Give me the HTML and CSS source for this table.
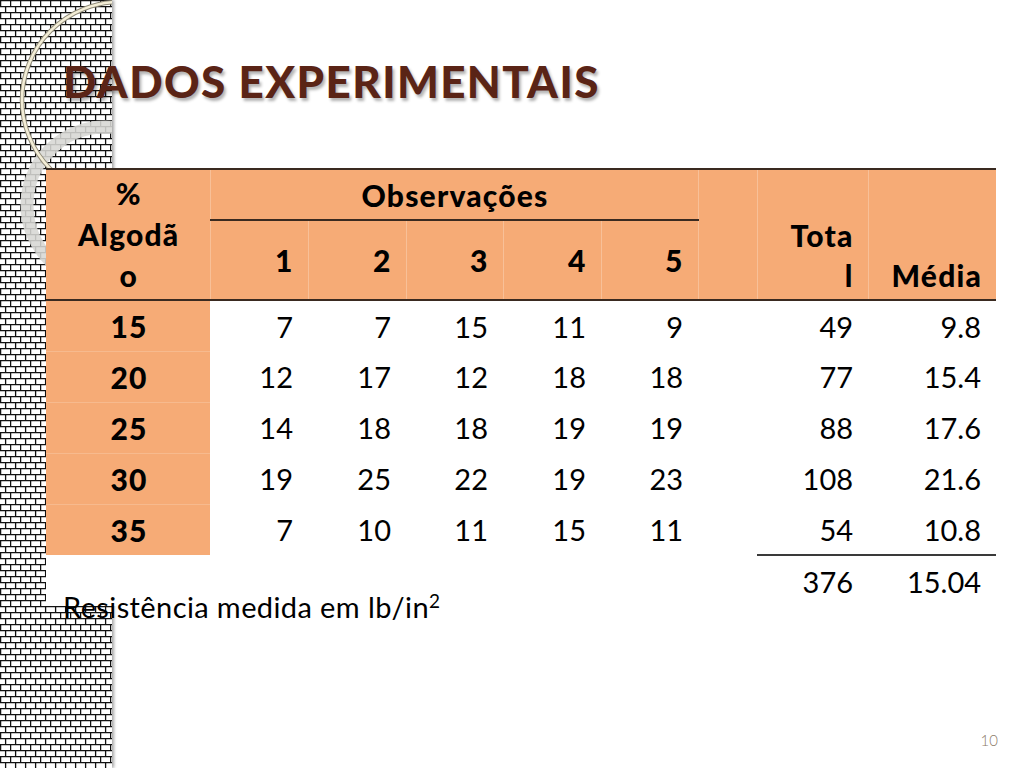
FILE: index.html
```html
<!DOCTYPE html>
<html lang="pt">
<head>
<meta charset="utf-8">
<title>Dados experimentais</title>
<link rel="stylesheet" href="styles.css">
</head>
<body>
<div class="slide">
  <div class="strip">
    <svg class="bricks" width="112" height="768" viewBox="0 0 112 768">
      <defs>
        <pattern id="brick" width="10" height="12" patternUnits="userSpaceOnUse">
          <rect width="10" height="12" fill="#ffffff"/>
          <path d="M0 0.6H10M0 6.6H10M0.6 0V6.6M5.6 6.6V12" stroke="#111" stroke-width="1.3" fill="none"/>
        </pattern>
      </defs>
      <rect width="112" height="768" fill="url(#brick)"/>
      <circle cx="105" cy="205" r="78" fill="none" stroke="rgba(215,215,212,0.88)" stroke-width="13"/>
      <circle cx="120" cy="100" r="98" fill="none" stroke="#8f8a78" stroke-width="4.5"/>
      <circle cx="120" cy="100" r="98" fill="none" stroke="#f3edd6" stroke-width="2.6"/>
    </svg>
  </div>

  <h1 class="title">DADOS EXPERIMENTAIS</h1>

  <table class="data">
    <colgroup>
      <col class="c-alg">
      <col class="c-obs"><col class="c-obs"><col class="c-obs3"><col class="c-obs"><col class="c-obs3">
      <col class="c-gap">
      <col class="c-tot">
      <col class="c-med">
    </colgroup>
    <thead>
      <tr class="h1">
        <th rowspan="2" class="alg">%<br>Algodã<br>o</th>
        <th colspan="5" class="obs">Observações</th>
        <th rowspan="2" class="sep"></th>
        <th rowspan="2" class="bot sep">Tota<br>l</th>
        <th rowspan="2" class="bot sep">Média</th>
      </tr>
      <tr class="h2">
        <th class="num first">1</th>
        <th class="num sep">2</th>
        <th class="num sep">3</th>
        <th class="num sep">4</th>
        <th class="num sep">5</th>
      </tr>
    </thead>
    <tbody>
      <tr><th class="rowh">15</th><td>7</td><td>7</td><td>15</td><td>11</td><td>9</td><td></td><td>49</td><td>9.8</td></tr>
      <tr><th class="rowh">20</th><td>12</td><td>17</td><td>12</td><td>18</td><td>18</td><td></td><td>77</td><td>15.4</td></tr>
      <tr><th class="rowh">25</th><td>14</td><td>18</td><td>18</td><td>19</td><td>19</td><td></td><td>88</td><td>17.6</td></tr>
      <tr><th class="rowh">30</th><td>19</td><td>25</td><td>22</td><td>19</td><td>23</td><td></td><td>108</td><td>21.6</td></tr>
      <tr><th class="rowh">35</th><td>7</td><td>10</td><td>11</td><td>15</td><td>11</td><td></td><td>54</td><td>10.8</td></tr>
      <tr class="sum"><td class="blank" colspan="7"></td><td class="tl">376</td><td class="tl">15.04</td></tr>
    </tbody>
  </table>

  <p class="note">Resistência medida em lb/in<sup>2</sup></p>

  <div class="pagenum">10</div>
</div>
</body>
</html>
```

FILE: styles.css
```css
* { box-sizing: border-box; }

html, body {
  margin: 0;
  padding: 0;
  background: #ffffff;
}

.slide {
  position: relative;
  width: 1024px;
  height: 768px;
  overflow: hidden;
  display: flex;
  flex-direction: column;
  font-family: "Lato", "Liberation Sans", sans-serif;
  color: #000;
  background: #fff;
}

.strip {
  position: absolute;
  left: 0;
  top: 0;
  width: 112px;
  height: 768px;
  box-shadow: 2px 0 3px rgba(0, 0, 0, 0.35);
  z-index: 0;
}

.bricks {
  display: block;
}

.title {
  position: relative;
  z-index: 2;
  margin: 0;
  padding: 55px 0 0 63px;
  font-size: 44px;
  line-height: 52px;
  font-weight: 900;
  color: #5a2416;
  letter-spacing: 1.4px;
  text-shadow: 2px 3px 3px rgba(0, 0, 0, 0.3);
}

.data {
  position: relative;
  z-index: 1;
  margin: 61px 0 0 46px;
  width: 950px;
  border-collapse: collapse;
  table-layout: fixed;
  font-size: 29px;
  background: #fff;
}

.c-alg { width: 164px; }
.c-obs { width: 98px; }
.c-obs3 { width: 97px; }
.c-gap { width: 59px; }
.c-tot { width: 111px; }
.c-med { width: 128px; }

.data thead tr {
  background: #f6ab76;
}

.data thead tr.h1 {
  border-top: 2px solid #3a2a20;
  height: 51px;
}

.data thead tr.h2 {
  height: 80px;
  border-bottom: 2px solid #3a2a20;
}

.data th {
  font-weight: 900;
  font-size: 30px;
  letter-spacing: 1.2px;
  padding: 0 14px 0 0;
}

.alg {
  text-align: center;
  padding: 0 0 0 2px !important;
  line-height: 41px;
  vertical-align: middle;
}

.obs {
  text-align: center;
  vertical-align: middle;
  border-bottom: 2px solid #3a2a20;
  border-left: 1px solid rgba(255, 255, 255, 0.25);
  padding: 0 0 0 2px !important;
}

.sep {
  border-left: 1px solid rgba(255, 255, 255, 0.25);
}

.first {
  border-left: 1px solid rgba(255, 255, 255, 0.25);
}

.bot {
  vertical-align: bottom;
  text-align: right;
  line-height: 40px;
  padding-bottom: 4px !important;
}

.num {
  text-align: right;
  vertical-align: middle;
}

.data tbody tr {
  height: 51px;
}

.data td {
  text-align: right;
  padding: 0 15px 0 0;
  font-weight: 400;
  vertical-align: middle;
}

.data .rowh {
  background: #f6ab76;
  text-align: center;
  padding: 0 0 0 2px;
  border-top: 1px solid rgba(255, 255, 255, 0.18);
}

.data tbody tr:first-child .rowh {
  border-top: none;
}

.sum {
  height: 50px;
}

.sum .tl {
  border-top: 2px solid #3a3a3a;
  vertical-align: top;
  padding-top: 8px;
}

.note {
  position: relative;
  z-index: 2;
  margin: -17px 0 0 63px;
  font-size: 29px;
  line-height: 36px;
  letter-spacing: 0.4px;
}

.note sup {
  font-size: 19px;
  line-height: 0;
  vertical-align: 0.55em;
}

.pagenum {
  margin-top: auto;
  align-self: flex-end;
  padding: 0 26px 19px 0;
  font-size: 15px;
  font-weight: 300;
  color: #8c7b68;
}
```
